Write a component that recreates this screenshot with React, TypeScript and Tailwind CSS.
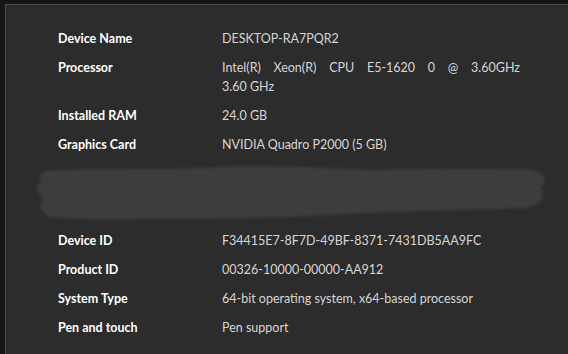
const specsTop = [
  { label: "Device Name", value: ["DESKTOP-RA7PQR2"] },
  { label: "Processor", value: ["Intel(R) Xeon(R) CPU E5-1620 0 @ 3.60GHz", "3.60 GHz"] },
  { label: "Installed RAM", value: ["24.0 GB"] },
  { label: "Graphics Card", value: ["NVIDIA Quadro P2000 (5 GB)"] },
];

const specsBottom = [
  { label: "Device ID", value: ["F34415E7-8F7D-49BF-8371-7431DB5AA9FC"] },
  { label: "Product ID", value: ["00326-10000-00000-AA912"] },
  { label: "System Type", value: ["64-bit operating system, x64-based processor"] },
  { label: "Pen and touch", value: ["Pen support"] },
];

function Row({ label, value }: { label: string; value: string[] }) {
  const wrapped = value.length > 1;
  return (
    <div className="grid grid-cols-[164px_298px] leading-[19px] text-[12.5px]">
      <div className="font-bold text-white">{label}</div>
      <div className="text-[#d6d6d6]">
        {value.map((line, i) => (
          <div
            key={i}
            className={wrapped && i < value.length - 1 ? "text-justify [text-align-last:justify]" : ""}
          >
            {line}
          </div>
        ))}
      </div>
    </div>
  );
}

// the redaction smear over the hidden rows
function Scribble() {
  return (
    <svg width="522" height="57" viewBox="0 0 522 57" className="block -ml-[26px]">
      <defs>
        <filter id="soft" x="-5%" y="-20%" width="110%" height="140%">
          <feGaussianBlur stdDeviation="1.6" />
        </filter>
      </defs>
      <path
        d="M16 7 C60 4 120 6 170 4 C220 0 290 4 340 6 C400 5 460 4 500 6 C514 10 516 18 508 24 C516 32 508 42 492 44 C440 46 380 47 330 49 C260 54 190 55 130 55 C80 55 40 56 18 53 C8 48 6 40 12 34 C2 28 4 20 10 16 C6 12 8 9 16 7 Z"
        fill="#3c3c3c"
        filter="url(#soft)"
      />
    </svg>
  );
}

export default function App() {
  return (
    <div
      className="w-[568px] h-[354px] bg-[#161616] pt-[4px] pl-[5px] overflow-hidden"
      style={{ fontFamily: 'Lato, "Noto Sans", sans-serif' }}
    >
      <div className="h-full bg-[#2c2c2c] border-t border-l border-[#4b4b4b] pt-[24px] pl-[52px]">
        <div className="flex flex-col gap-[10px]">
          {specsTop.map((s) => (
            <Row key={s.label} {...s} />
          ))}
          <Scribble />
          {specsBottom.map((s) => (
            <Row key={s.label} {...s} />
          ))}
        </div>
      </div>
    </div>
  );
}
